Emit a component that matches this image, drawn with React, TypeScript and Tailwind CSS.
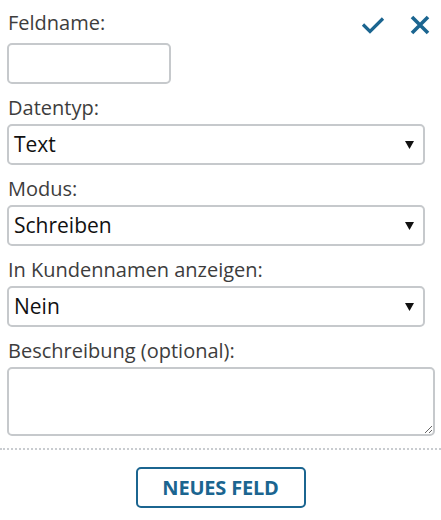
import { ReactNode } from 'react';

const font = { fontFamily: '"Open Sans", "Noto Sans", sans-serif' };

function Label({ children }: { children: ReactNode }) {
  return <div className="h-6 pl-px text-[20px] leading-6 text-[#3d3d3d]">{children}</div>;
}

function Field({ label, children }: { label: string; children: ReactNode }) {
  return (
    <div className="mt-3">
      <Label>{label}</Label>
      <div className="mt-1">{children}</div>
    </div>
  );
}

function FakeSelect({ value }: { value: string }) {
  return (
    <div className="flex h-[41px] w-[418px] items-center justify-between rounded-[5px] border-2 border-[#c6c9cc] bg-white pl-[5px] pr-[9px]">
      <span className="text-[21px] text-[#111]">{value}</span>
      <svg width="9" height="8" viewBox="0 0 9 8" className="mt-[1px]">
        <path d="M0 0 L9 0 L4.5 8 Z" fill="#111" />
      </svg>
    </div>
  );
}

export default function App() {
  return (
    <div className="min-h-[520px] w-[441px] bg-white" style={font}>
      <div className="px-[7px] pt-[11px]">
        {/* header row */}
        <div className="flex items-start justify-between">
          <Label>Feldname:</Label>
          <div className="mr-[4px] flex items-center gap-[25px] pt-[4px]">
            <svg width="24" height="18" viewBox="0 0 24 18">
              <path d="M2 8.5 L9 15.5 L22 2.5" fill="none" stroke="#1b6590" strokeWidth="3.2" />
            </svg>
            <svg width="20" height="20" viewBox="0 0 20 20">
              <path d="M2 2 L18 18 M18 2 L2 18" fill="none" stroke="#1b6590" strokeWidth="3.6" />
            </svg>
          </div>
        </div>
        <input
          type="text"
          className="mt-2 block h-[41px] w-[164px] rounded-[5px] border-2 border-[#c6c9cc] bg-white px-2 outline-none"
        />

        <Field label="Datentyp:">
          <FakeSelect value="Text" />
        </Field>
        <Field label="Modus:">
          <FakeSelect value="Schreiben" />
        </Field>
        <Field label="In Kundennamen anzeigen:">
          <FakeSelect value="Nein" />
        </Field>
        <Field label="Beschreibung (optional):">
          <textarea className="block h-[69px] w-[428px] rounded-[5px] border-2 border-[#c6c9cc] bg-white p-1 outline-none" />
        </Field>
      </div>

      <div className="mt-[12px] border-t-2 border-dotted border-[#c9ccd0]" />

      <div className="mt-[17px] flex justify-center">
        <button className="h-[41px] w-[170px] rounded-[5px] border-2 border-[#1b6590] bg-white text-[20px] font-bold tracking-[-0.2px] text-[#1b6590]">
          NEUES FELD
        </button>
      </div>
    </div>
  );
}
